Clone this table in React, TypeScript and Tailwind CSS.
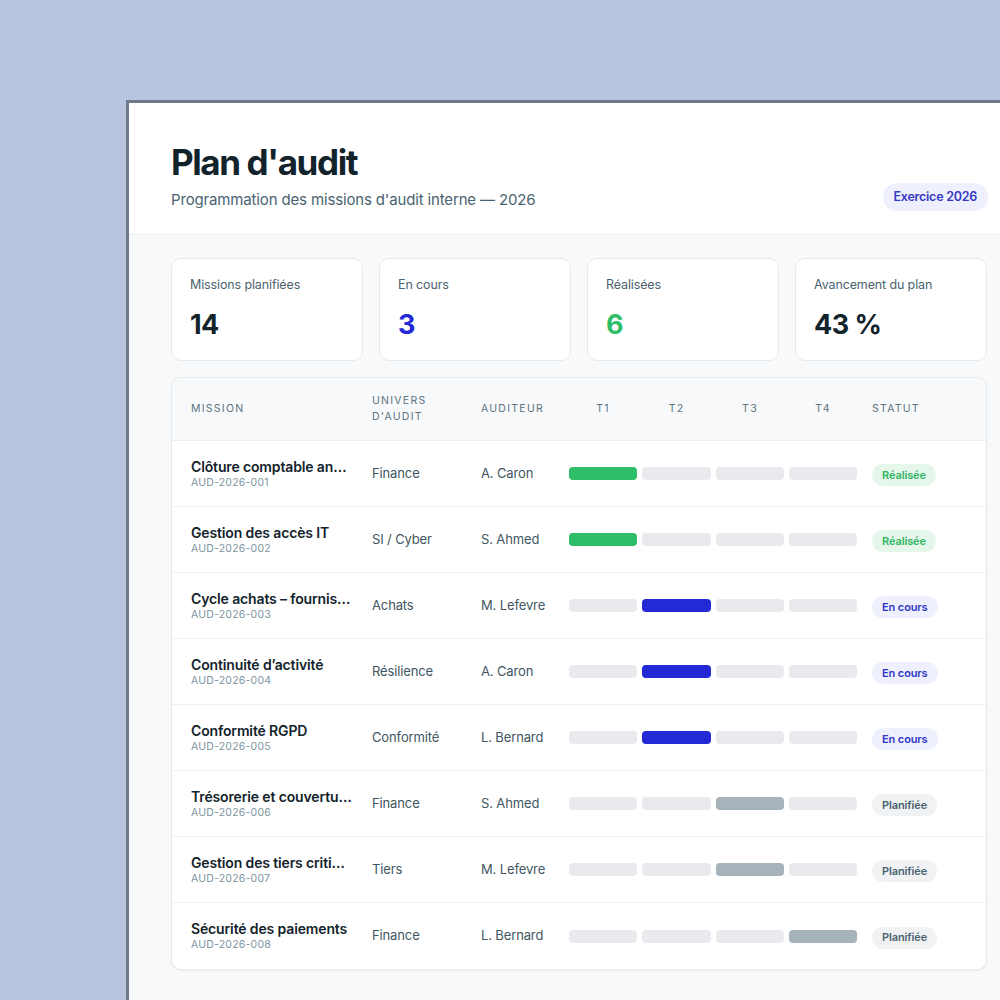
import React from 'react';

type Status = 'done' | 'progress' | 'planned';

type Mission = {
  title: string;
  code: string;
  domain: string;
  auditor: string;
  quarter: number;
  status: Status;
};

const missions: Mission[] = [
  { title: 'Clôture comptable annuelle', code: 'AUD-2026-001', domain: 'Finance', auditor: 'A. Caron', quarter: 0, status: 'done' },
  { title: 'Gestion des accès IT', code: 'AUD-2026-002', domain: 'SI / Cyber', auditor: 'S. Ahmed', quarter: 0, status: 'done' },
  { title: 'Cycle achats – fournisseurs', code: 'AUD-2026-003', domain: 'Achats', auditor: 'M. Lefevre', quarter: 1, status: 'progress' },
  { title: 'Continuité d’activité', code: 'AUD-2026-004', domain: 'Résilience', auditor: 'A. Caron', quarter: 1, status: 'progress' },
  { title: 'Conformité RGPD', code: 'AUD-2026-005', domain: 'Conformité', auditor: 'L. Bernard', quarter: 1, status: 'progress' },
  { title: 'Trésorerie et couverture de change', code: 'AUD-2026-006', domain: 'Finance', auditor: 'S. Ahmed', quarter: 2, status: 'planned' },
  { title: 'Gestion des tiers critiques', code: 'AUD-2026-007', domain: 'Tiers', auditor: 'M. Lefevre', quarter: 2, status: 'planned' },
  { title: 'Sécurité des paiements', code: 'AUD-2026-008', domain: 'Finance', auditor: 'L. Bernard', quarter: 3, status: 'planned' },
];

const barColor: Record<Status, string> = {
  done: 'bg-[#2fbe68]',
  progress: 'bg-[#2329d4]',
  planned: 'bg-[#a7b3ba]',
};

const pill: Record<Status, { label: string; cls: string }> = {
  done: { label: 'Réalisée', cls: 'bg-[#e5f7eb] text-[#2fb463]' },
  progress: { label: 'En cours', cls: 'bg-[#eef0fd] text-[#3237c4]' },
  planned: { label: 'Planifiée', cls: 'bg-[#f0f2f4] text-[#4a6370]' },
};

const stats = [
  { label: 'Missions planifiées', value: '14', cls: 'text-[#13232b]' },
  { label: 'En cours', value: '3', cls: 'text-[#2329d4]' },
  { label: 'Réalisées', value: '6', cls: 'text-[#2fbe68]' },
  { label: 'Avancement du plan', value: '43 %', cls: 'text-[#13232b]' },
];

const cols = 'grid grid-cols-[181px_109px_88px_73px_74px_73px_73px_1fr] items-center pl-[19px]';

export default function App() {
  return (
    <div
      className="w-[1000px] h-[1000px] overflow-hidden bg-[#b9c5e0] pl-[126px] pt-[100px]"
      style={{ fontFamily: 'Inter, "Noto Sans", sans-serif' }}
    >
      <div className="w-[906px] h-[960px] border-l-[3px] border-t-[3px] border-[#6f7a8b] bg-[#f7f9fa]">
        {/* header */}
        <div className="bg-white border-b border-[#eceff2] h-[132px] pl-[42px] pr-[44px] flex items-start justify-between">
          <div className="pt-[39px]">
            <h1 className="text-[35px] leading-[40px] font-bold tracking-[-0.04em] text-[#13232b]">Plan d'audit</h1>
            <p className="mt-[8px] text-[15px] leading-[20px] tracking-[-0.01em] text-[#4a6370]">
              Programmation des missions d'audit interne — 2026
            </p>
          </div>
          <div className="mt-[80px] h-[28px] px-[11px] rounded-full bg-[#eff0fd] text-[#3438c2] text-[12.5px] font-semibold tracking-[-0.02em] flex items-center">
            Exercice 2026
          </div>
        </div>

        {/* body */}
        <div className="pl-[42px] pt-[23px] w-[858px]">
          <div className="grid grid-cols-4 gap-[16px]">
            {stats.map((s) => (
              <div key={s.label} className="h-[103px] rounded-[10px] border border-[#e6eaed] bg-white pl-[18px] pt-[18px]">
                <div className="text-[12.5px] leading-[16px] tracking-[-0.01em] text-[#4a6370]">{s.label}</div>
                <div className={`mt-[16px] text-[27px] leading-[32px] font-bold tracking-[-0.02em] ${s.cls}`}>{s.value}</div>
              </div>
            ))}
          </div>

          <div className="mt-[16px] rounded-[10px] border border-[#e6eaed] bg-white overflow-hidden shadow-[0_1px_2px_rgba(16,24,40,0.05)]">
            <div className={`${cols} h-[63px] bg-[#f7f9fa] border-b border-[#eceff2] text-[10.5px] leading-[16px] tracking-[0.12em] uppercase text-[#5d7380]`}>
              <div>Mission</div>
              <div>
                Univers
                <br />
                d'audit
              </div>
              <div>Auditeur</div>
              <div className="text-center pr-[5px]">T1</div>
              <div className="text-center pr-[5px]">T2</div>
              <div className="text-center pr-[5px]">T3</div>
              <div className="text-center pr-[5px]">T4</div>
              <div className="pl-[10px]">Statut</div>
            </div>

            {missions.map((m, i) => (
              <div
                key={m.code}
                className={`${cols} h-[66px] ${i < missions.length - 1 ? 'border-b border-[#eef1f3]' : ''}`}
              >
                <div className="pr-[20px] min-w-0">
                  <div className="truncate text-[14px] leading-[18px] font-semibold tracking-[-0.01em] text-[#13232b]">{m.title}</div>
                  <div className="text-[10.5px] leading-[14px] tracking-[0.02em] text-[#7d95a0]">{m.code}</div>
                </div>
                <div className="text-[13px] text-[#3f5662] tracking-[-0.01em]">{m.domain}</div>
                <div className="text-[13px] text-[#3f5662] tracking-[-0.01em]">{m.auditor}</div>
                {[0, 1, 2, 3].map((q) => (
                  <div key={q} className="pr-[5px]">
                    <div className={`h-[13px] rounded-[4px] ${q === m.quarter ? barColor[m.status] : 'bg-[#e8eaed]'}`} />
                  </div>
                ))}
                <div className="pl-[10px]">
                  <span className={`inline-flex items-center h-[22px] px-[10px] rounded-full text-[11px] font-semibold tracking-[-0.01em] ${pill[m.status].cls}`}>
                    {pill[m.status].label}
                  </span>
                </div>
              </div>
            ))}
          </div>
        </div>
      </div>
    </div>
  );
}
